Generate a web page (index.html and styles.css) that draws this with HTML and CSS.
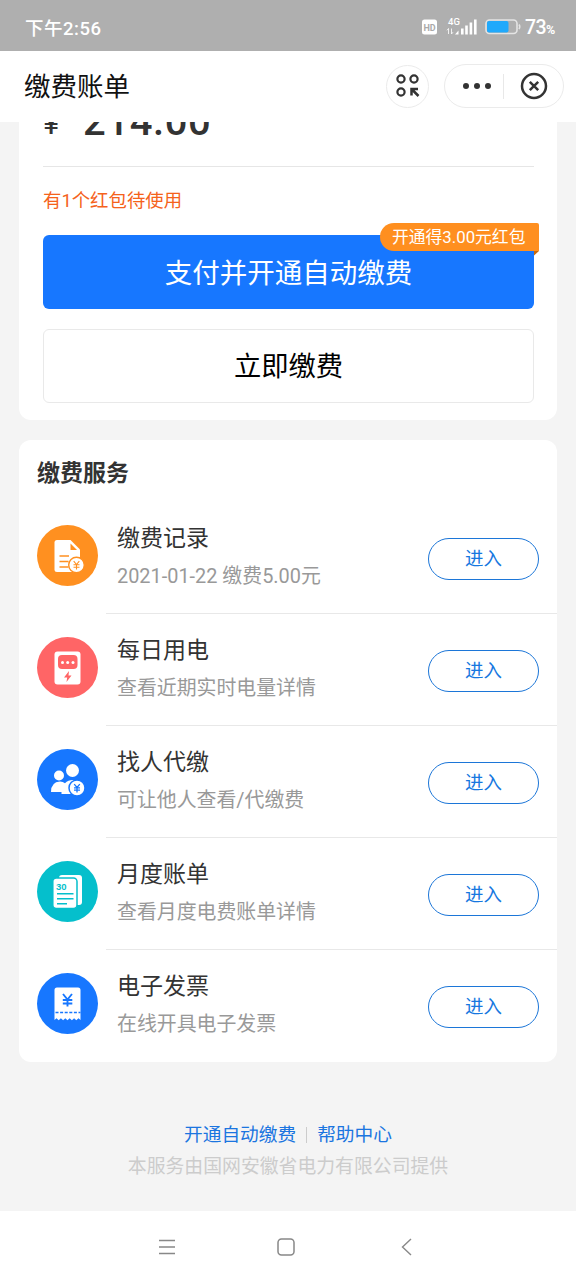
FILE: index.html
```html
<!DOCTYPE html>
<html lang="zh-CN">
<head>
<meta charset="utf-8">
<title>缴费账单</title>
<link rel="stylesheet" href="styles.css">
</head>
<body>
<div class="screen">
  <header class="status">
    <span class="time">下午2:56</span>
    <svg class="status-icons" width="100" height="24" viewBox="0 0 100 24">
      <rect x="1" y="4.500" width="15" height="15" rx="2.500" fill="#fff"/>
      <text x="8.500" y="15.500" class="hd" text-anchor="middle">HD</text>
      <text x="27" y="10" class="net">4G</text>
      <path d="M27.500 19v-5.500M26 15.300l1.500-1.800M30.500 13.500V19M32 17.200l-1.500 1.800" stroke="#fff" fill="none" stroke-width=".8"/>
      <path d="M34 19.500l3.500-4v4zM40 19.500v-6h2.600v6zM44.200 19.500V10.500h2.600v9zM48.600 19.500V7.500h2.600v12zM53 19.500V4.500h2.600v15z" fill="#fff"/>
      <rect x="65" y="5" width="31" height="13.500" rx="3.500" fill="none" stroke="#e4e4e4" stroke-width="1.600"/>
      <rect x="66" y="6" width="21.500" height="11.500" rx="2" fill="#20a9fb"/>
      <path d="M98 9.500q1.500 2.300 0 4.600" stroke="#e4e4e4" stroke-width="1.600" fill="none"/>
    </svg>
    <span class="percent">73<small>%</small></span>
  </header>

  <nav class="titlebar">
    <h1>缴费账单</h1>
    <span class="round">
      <svg width="24" height="24" viewBox="0 0 24 24" fill="none" stroke="#333" stroke-width="2.200">
        <circle cx="5" cy="5" r="3.600"/><circle cx="18" cy="5" r="3.600"/><circle cx="5" cy="18" r="3.600"/>
        <path d="M22 15H15.500V21.500M15.500 15l7 7" stroke-width="2.500"/>
      </svg>
    </span>
    <span class="capsule">
      <svg class="dots" width="30" height="8" viewBox="0 0 30 8" fill="#333"><circle cx="4" cy="4" r="3"/><circle cx="15" cy="4" r="3"/><circle cx="26" cy="4" r="3"/></svg>
      <i></i>
      <svg class="close" width="28" height="28" viewBox="0 0 28 28" fill="none" stroke="#333" stroke-width="2.500"><circle cx="14" cy="14" r="12"/><path d="M9.800 9.800l8.400 8.400M18.200 9.800l-8.400 8.400"/></svg>
    </span>
  </nav>

  <main class="content">
    <section class="card pay">
      <div class="amount"><span class="yen">¥</span><span class="sum">214.00</span></div>
      <p class="packet">有1个红包待使用</p>
      <div class="primary">支付并开通自动缴费
        <span class="tag">开通得3.00元红包<svg width="5" height="5" viewBox="0 0 5 5"><path d="M0 0h5L0 4.500z" fill="#c9690b"/></svg></span>
      </div>
      <div class="secondary">立即缴费</div>
    </section>

    <section class="card services">
      <h2>缴费服务</h2>
      <div class="row">
        <svg class="icon" viewBox="0 0 61 61"><circle cx="30.500" cy="30.500" r="30.500" fill="#ff9020"/>
          <path d="M20 15h13.500l9.500 9.500V45q0 2-2 2H20q-2.500 0-2.500-2.500v-27Q17.500 15 20 15z" fill="#fff"/>
          <path d="M33.500 18.500v6.500h6.500z" fill="#ff9020"/>
          <path d="M22.500 31h9.500M22.500 36.500h9M22.500 42h9" stroke="#ff9020" stroke-width="1.600"/>
          <circle cx="39.500" cy="40" r="7.800" fill="#fff" stroke="#ff9020" stroke-width="1.400"/>
          <path d="M36.700 36.200l2.800 3.300 2.800-3.300M39.500 39.500v5M36.500 39.800h6M36.500 42.200h6" stroke="#ff9020" stroke-width="1.100" fill="none"/></svg>
        <div class="line"><div class="info"><b>缴费记录</b><span>2021-01-22 缴费5.00元</span></div><a class="enter">进入</a></div>
      </div>
      <div class="row">
        <svg class="icon" viewBox="0 0 61 61"><circle cx="30.500" cy="30.500" r="30.500" fill="#ff6566"/>
          <rect x="17.500" y="14.500" width="26" height="33" rx="3" fill="#fff"/>
          <rect x="21" y="18" width="19.500" height="14" rx="4" fill="#ff6566"/>
          <g fill="#fff"><circle cx="25.500" cy="25.500" r="1.500"/><circle cx="30.700" cy="25.500" r="1.500"/><circle cx="36" cy="25.500" r="1.500"/></g>
          <path d="M32 34l-5 6.500h3.200L29.500 45l5-6.500h-3z" fill="#ff6566"/></svg>
        <div class="line"><div class="info"><b>每日用电</b><span>查看近期实时电量详情</span></div><a class="enter">进入</a></div>
      </div>
      <div class="row">
        <svg class="icon" viewBox="0 0 61 61"><circle cx="30.500" cy="30.500" r="30.500" fill="#1777ff"/>
          <circle cx="22" cy="26.500" r="5" fill="#fff"/><circle cx="35.500" cy="21.500" r="6.500" fill="#fff"/>
          <path d="M14 43q0-10 9-10.500 3 0 5 1.800 3-3.300 8-3.300 6 0 9 6l-3 8H24.500v-2z" fill="#fff"/>
          <circle cx="40" cy="39" r="8" fill="#fff" stroke="#1777ff" stroke-width="1.500"/>
          <path d="M37.200 35.200L40 38.500l2.800-3.300M40 38.500v5M37 38.800h6M37 41.200h6" stroke="#1777ff" stroke-width="1.300" fill="none"/></svg>
        <div class="line"><div class="info"><b>找人代缴</b><span>可让他人查看/代缴费</span></div><a class="enter">进入</a></div>
      </div>
      <div class="row">
        <svg class="icon" viewBox="0 0 61 61"><circle cx="30.500" cy="30.500" r="30.500" fill="#05bfcc"/>
          <rect x="22" y="14" width="23" height="30" rx="3" fill="#fff"/>
          <rect x="15.800" y="17" width="24.200" height="30.500" rx="3.500" fill="#fff" stroke="#05bfcc" stroke-width="1.500"/>
          <text x="19" y="28.500" class="cal">30</text>
          <path d="M20 32.800h16.500M20 37.800h16.500M20 42.800h10" stroke="#05bfcc" stroke-width="1.500"/></svg>
        <div class="line"><div class="info"><b>月度账单</b><span>查看月度电费账单详情</span></div><a class="enter">进入</a></div>
      </div>
      <div class="row">
        <svg class="icon" viewBox="0 0 61 61"><circle cx="30.500" cy="30.500" r="30.500" fill="#1777ff"/>
          <path d="M20 14.500h21q2.500 0 2.500 2.500v30l-2-1.800-2.200 2-2.200-2-2.200 2-2.200-2-2.200 2-2.200-2-2.200 2-2.200-2-2.200 2-2.200-2-2 1.800V17q0-2.500 2.500-2.500z" fill="#fff"/>
          <path d="M18.500 39.500h25" stroke="#1777ff" stroke-width="1.500" stroke-dasharray="3 1.600"/>
          <path d="M26 21l4.500 5.500L35 21M30.500 26.500V33.500M25.800 27h9.500M25.800 30.500h9.500" stroke="#1777ff" stroke-width="1.900" fill="none"/></svg>
        <div class="line"><div class="info"><b>电子发票</b><span>在线开具电子发票</span></div><a class="enter">进入</a></div>
      </div>
    </section>

    <footer class="foot">
      <div class="links"><a>开通自动缴费</a><i></i><a>帮助中心</a></div>
      <p>本服务由国网安徽省电力有限公司提供</p>
    </footer>
  </main>

  <nav class="system">
    <svg width="18" height="18" viewBox="0 0 18 18" fill="none" stroke="#888" stroke-width="1.300"><path d="M1 2.500h16M1 9h16M1 15.500h16"/></svg>
    <svg width="18" height="18" viewBox="0 0 18 18" fill="none" stroke="#888" stroke-width="1.500"><rect x="1" y="1" width="16" height="16" rx="3.500"/></svg>
    <svg width="18" height="18" viewBox="0 0 18 18" fill="none" stroke="#888" stroke-width="1.400"><path d="M13 1L4.500 9l8.500 8"/></svg>
  </nav>
</div>
</body>
</html>
```

FILE: styles.css
```css
* { box-sizing: border-box; }
body, h1, h2, p { margin: 0; }
body { font-family: Roboto, "Noto Sans CJK SC", sans-serif; color: #333; background: #f4f4f4; }
svg { display: block; flex: none; }
.screen { width: 576px; height: 1280px; display: flex; flex-direction: column; overflow: hidden; }

.status { height: 51px; flex: none; background: #afafaf; color: #fff; display: flex; align-items: center; padding: 3px 20px 0 25px; }
.time { font-size: 18.500px; font-weight: 500; letter-spacing: .5px; flex: 1; }
.status-icons { margin-right: 4px; }
.hd { font: 700 9px Roboto, sans-serif; fill: #aaa; }
.net { font: 500 9.500px Roboto, sans-serif; fill: #fff; }
.percent { font-size: 19.500px; font-weight: 500; width: 31px; white-space: nowrap; display: flex; align-items: baseline; letter-spacing: -.6px; }
.percent small { font-size: 12.500px; font-weight: 700; }

.titlebar { height: 71px; flex: none; background: #fff; display: flex; align-items: center; padding: 0 12px 1px 24px; }
.titlebar h1 { flex: 1; font-size: 26.500px; font-weight: 400; line-height: 40px; padding-top: 2px; color: #111; }
.round { width: 43px; height: 43px; border: 1px solid #ebebeb; border-radius: 50%; display: grid; place-items: center; margin-right: 15px; }
.capsule { width: 120px; height: 44px; border: 1px solid #ebebeb; border-radius: 22px; display: flex; align-items: center; padding-left: 17px; }
.capsule i { width: 1px; height: 25px; background: #e8e8e8; margin: 0 16px 0 11px; }

.content { flex: 1; overflow: hidden; padding: 0 19px; }
.card { background: #fff; }
.pay { height: 298px; border-radius: 0 0 12px 12px; padding: 0 23px 0 24px; }
.amount { height: 45px; border-bottom: 1px solid #e6e6e6; display: flex; align-items: flex-end; padding-bottom: 24px; }
.yen { font-size: 31px; line-height: 30px; width: 40px; padding-bottom: 3px; }
.sum { font-size: 40px; line-height: 40px; font-weight: 500; letter-spacing: .6px; }
.packet { font-size: 18.400px; line-height: 26px; color: #f5621b; padding-top: 21px; height: 68px; }
.primary { position: relative; height: 74px; border-radius: 6px; background: #1777ff; color: #fff; font-size: 27.500px; line-height: 77px; text-align: center; }
.tag { position: absolute; top: -12px; right: -5px; width: 159px; height: 28px; background: #ff8f1f; border-radius: 14px 2px 0 14px; font-size: 16.800px; line-height: 28px; padding-left: 12px; text-align: left; white-space: nowrap; }
.tag svg { position: absolute; right: 0; top: 28px; }
.secondary { margin-top: 20px; height: 74px; border: 1px solid #e9e9e9; border-radius: 6px; color: #000; font-size: 27.300px; line-height: 74px; text-align: center; }

.services { margin-top: 20px; height: 622px; border-radius: 12px; padding-left: 18px; }
.services h2 { font-size: 23px; line-height: 34px; font-weight: 700; padding-top: 17px; height: 62px; }
.row { height: 112px; display: flex; }
.icon { width: 61px; height: 61px; margin: 23px 8px 0 0; }
.line { flex: 1; display: flex; justify-content: space-between; padding: 0 18px 0 11px; border-bottom: 1px solid #e8e8e8; }
.row:last-child .line { border-bottom: 0; }
.info { padding-top: 20px; }
.info b { display: block; font-size: 23px; font-weight: 400; line-height: 34px; }
.info span { display: block; font-size: 19.900px; line-height: 30px; margin-top: 6px; color: #999; }
.enter { margin-top: 36px; width: 111px; height: 42px; border: 1px solid #1c76d8; border-radius: 21px; color: #1677e0; font-size: 18.500px; line-height: 40px; text-align: center; }

.foot { padding-top: 58px; text-align: center; font-size: 18.700px; line-height: 30px; }
.links { display: flex; justify-content: center; align-items: center; color: #1b75e0; height: 30px; }
.links i { width: 1px; height: 16px; background: #ccc; margin: 0 10px; }
.foot p { color: #ccc; font-size: 18.850px; line-height: 34px; }

.system { height: 69px; flex: none; background: #fff; display: flex; justify-content: space-between; padding: 27px 160px 0 158px; }
.system svg:nth-child(2) { margin-right: 2px; }
.cal { font: 700 9.500px "Liberation Sans", sans-serif; fill: #05bfcc; }
```
